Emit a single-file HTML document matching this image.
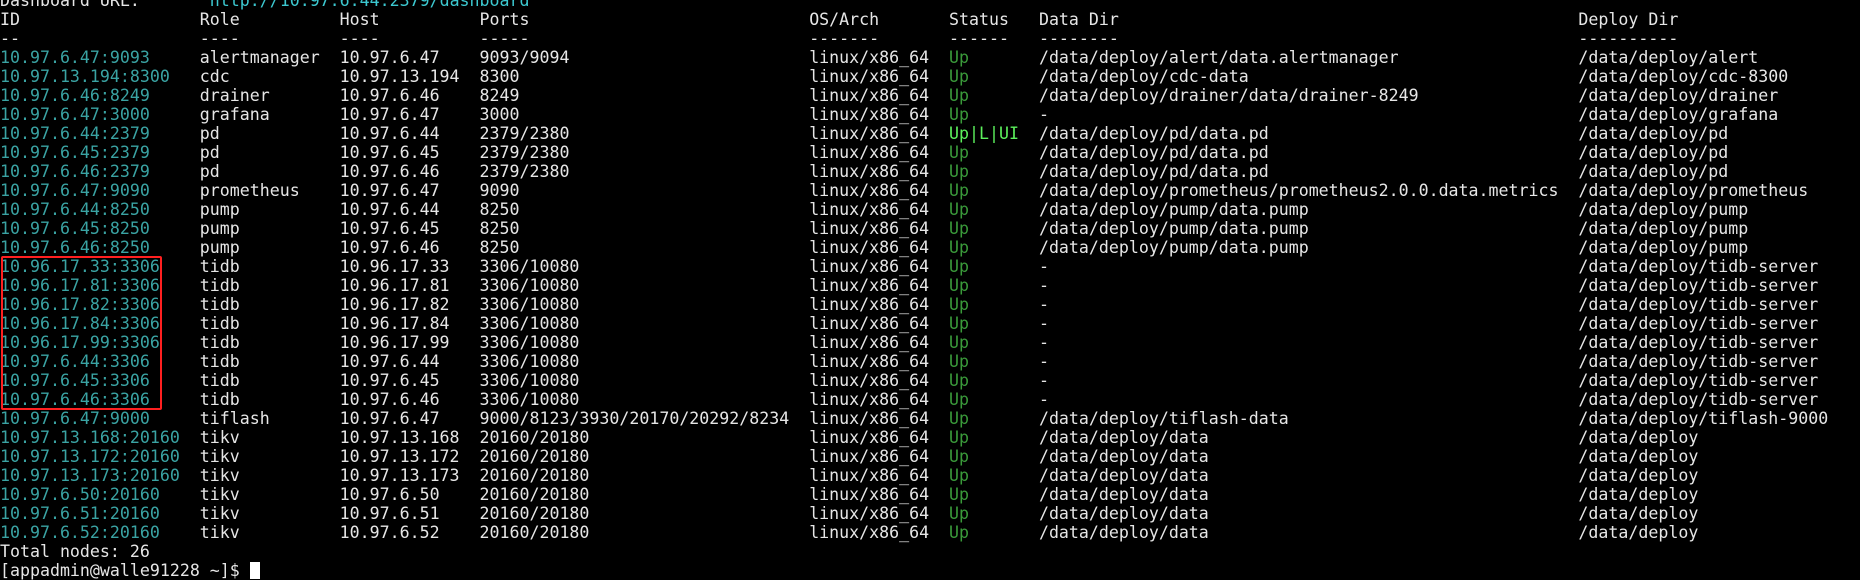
<!DOCTYPE html>
<html><head><meta charset="utf-8"><style>
html,body{margin:0;padding:0;background:#000;width:1860px;height:573px;overflow:hidden}
#t{position:absolute;left:0;top:-9.5px;font-family:"DejaVu Sans Mono","Liberation Mono",monospace;font-size:16.6px;line-height:19px;color:#e6e6e6}
.l{height:19px;white-space:pre}
.l span{display:inline-block;white-space:pre}
.a{width:20ch}.b{width:14ch}.c{width:14ch}.d{width:33ch}.e{width:14ch}.f{width:9ch}.g{width:54ch}
.i{color:#3aa3a3}.u{color:#3a9a3a}.uu{color:#5cf05c}.url{color:#3cc8d0}
#box{position:absolute;left:1px;top:256px;width:157px;height:150px;border:2px solid #ff2020;border-radius:2px}
.cur{display:inline-block;width:10px;height:17px;background:#fff;vertical-align:-3px}
</style></head><body>
<div id="t"><div class="l">Dashboard URL:       <span class="url">http://10.97.6.44:2379/dashboard</span></div><div class="l"><span class="a">ID</span><span class="b">Role</span><span class="c">Host</span><span class="d">Ports</span><span class="e">OS/Arch</span><span class="f">Status</span><span class="g">Data Dir</span><span>Deploy Dir</span></div><div class="l"><span class="a">--</span><span class="b">----</span><span class="c">----</span><span class="d">-----</span><span class="e">-------</span><span class="f">------</span><span class="g">--------</span><span>----------</span></div><div class="l"><span class="a i">10.97.6.47:9093</span><span class="b">alertmanager</span><span class="c">10.97.6.47</span><span class="d">9093/9094</span><span class="e">linux/x86_64</span><span class="f u">Up</span><span class="g">/data/deploy/alert/data.alertmanager</span><span>/data/deploy/alert</span></div><div class="l"><span class="a i">10.97.13.194:8300</span><span class="b">cdc</span><span class="c">10.97.13.194</span><span class="d">8300</span><span class="e">linux/x86_64</span><span class="f u">Up</span><span class="g">/data/deploy/cdc-data</span><span>/data/deploy/cdc-8300</span></div><div class="l"><span class="a i">10.97.6.46:8249</span><span class="b">drainer</span><span class="c">10.97.6.46</span><span class="d">8249</span><span class="e">linux/x86_64</span><span class="f u">Up</span><span class="g">/data/deploy/drainer/data/drainer-8249</span><span>/data/deploy/drainer</span></div><div class="l"><span class="a i">10.97.6.47:3000</span><span class="b">grafana</span><span class="c">10.97.6.47</span><span class="d">3000</span><span class="e">linux/x86_64</span><span class="f u">Up</span><span class="g">-</span><span>/data/deploy/grafana</span></div><div class="l"><span class="a i">10.97.6.44:2379</span><span class="b">pd</span><span class="c">10.97.6.44</span><span class="d">2379/2380</span><span class="e">linux/x86_64</span><span class="f uu">Up|L|UI</span><span class="g">/data/deploy/pd/data.pd</span><span>/data/deploy/pd</span></div><div class="l"><span class="a i">10.97.6.45:2379</span><span class="b">pd</span><span class="c">10.97.6.45</span><span class="d">2379/2380</span><span class="e">linux/x86_64</span><span class="f u">Up</span><span class="g">/data/deploy/pd/data.pd</span><span>/data/deploy/pd</span></div><div class="l"><span class="a i">10.97.6.46:2379</span><span class="b">pd</span><span class="c">10.97.6.46</span><span class="d">2379/2380</span><span class="e">linux/x86_64</span><span class="f u">Up</span><span class="g">/data/deploy/pd/data.pd</span><span>/data/deploy/pd</span></div><div class="l"><span class="a i">10.97.6.47:9090</span><span class="b">prometheus</span><span class="c">10.97.6.47</span><span class="d">9090</span><span class="e">linux/x86_64</span><span class="f u">Up</span><span class="g">/data/deploy/prometheus/prometheus2.0.0.data.metrics</span><span>/data/deploy/prometheus</span></div><div class="l"><span class="a i">10.97.6.44:8250</span><span class="b">pump</span><span class="c">10.97.6.44</span><span class="d">8250</span><span class="e">linux/x86_64</span><span class="f u">Up</span><span class="g">/data/deploy/pump/data.pump</span><span>/data/deploy/pump</span></div><div class="l"><span class="a i">10.97.6.45:8250</span><span class="b">pump</span><span class="c">10.97.6.45</span><span class="d">8250</span><span class="e">linux/x86_64</span><span class="f u">Up</span><span class="g">/data/deploy/pump/data.pump</span><span>/data/deploy/pump</span></div><div class="l"><span class="a i">10.97.6.46:8250</span><span class="b">pump</span><span class="c">10.97.6.46</span><span class="d">8250</span><span class="e">linux/x86_64</span><span class="f u">Up</span><span class="g">/data/deploy/pump/data.pump</span><span>/data/deploy/pump</span></div><div class="l"><span class="a i">10.96.17.33:3306</span><span class="b">tidb</span><span class="c">10.96.17.33</span><span class="d">3306/10080</span><span class="e">linux/x86_64</span><span class="f u">Up</span><span class="g">-</span><span>/data/deploy/tidb-server</span></div><div class="l"><span class="a i">10.96.17.81:3306</span><span class="b">tidb</span><span class="c">10.96.17.81</span><span class="d">3306/10080</span><span class="e">linux/x86_64</span><span class="f u">Up</span><span class="g">-</span><span>/data/deploy/tidb-server</span></div><div class="l"><span class="a i">10.96.17.82:3306</span><span class="b">tidb</span><span class="c">10.96.17.82</span><span class="d">3306/10080</span><span class="e">linux/x86_64</span><span class="f u">Up</span><span class="g">-</span><span>/data/deploy/tidb-server</span></div><div class="l"><span class="a i">10.96.17.84:3306</span><span class="b">tidb</span><span class="c">10.96.17.84</span><span class="d">3306/10080</span><span class="e">linux/x86_64</span><span class="f u">Up</span><span class="g">-</span><span>/data/deploy/tidb-server</span></div><div class="l"><span class="a i">10.96.17.99:3306</span><span class="b">tidb</span><span class="c">10.96.17.99</span><span class="d">3306/10080</span><span class="e">linux/x86_64</span><span class="f u">Up</span><span class="g">-</span><span>/data/deploy/tidb-server</span></div><div class="l"><span class="a i">10.97.6.44:3306</span><span class="b">tidb</span><span class="c">10.97.6.44</span><span class="d">3306/10080</span><span class="e">linux/x86_64</span><span class="f u">Up</span><span class="g">-</span><span>/data/deploy/tidb-server</span></div><div class="l"><span class="a i">10.97.6.45:3306</span><span class="b">tidb</span><span class="c">10.97.6.45</span><span class="d">3306/10080</span><span class="e">linux/x86_64</span><span class="f u">Up</span><span class="g">-</span><span>/data/deploy/tidb-server</span></div><div class="l"><span class="a i">10.97.6.46:3306</span><span class="b">tidb</span><span class="c">10.97.6.46</span><span class="d">3306/10080</span><span class="e">linux/x86_64</span><span class="f u">Up</span><span class="g">-</span><span>/data/deploy/tidb-server</span></div><div class="l"><span class="a i">10.97.6.47:9000</span><span class="b">tiflash</span><span class="c">10.97.6.47</span><span class="d">9000/8123/3930/20170/20292/8234</span><span class="e">linux/x86_64</span><span class="f u">Up</span><span class="g">/data/deploy/tiflash-data</span><span>/data/deploy/tiflash-9000</span></div><div class="l"><span class="a i">10.97.13.168:20160</span><span class="b">tikv</span><span class="c">10.97.13.168</span><span class="d">20160/20180</span><span class="e">linux/x86_64</span><span class="f u">Up</span><span class="g">/data/deploy/data</span><span>/data/deploy</span></div><div class="l"><span class="a i">10.97.13.172:20160</span><span class="b">tikv</span><span class="c">10.97.13.172</span><span class="d">20160/20180</span><span class="e">linux/x86_64</span><span class="f u">Up</span><span class="g">/data/deploy/data</span><span>/data/deploy</span></div><div class="l"><span class="a i">10.97.13.173:20160</span><span class="b">tikv</span><span class="c">10.97.13.173</span><span class="d">20160/20180</span><span class="e">linux/x86_64</span><span class="f u">Up</span><span class="g">/data/deploy/data</span><span>/data/deploy</span></div><div class="l"><span class="a i">10.97.6.50:20160</span><span class="b">tikv</span><span class="c">10.97.6.50</span><span class="d">20160/20180</span><span class="e">linux/x86_64</span><span class="f u">Up</span><span class="g">/data/deploy/data</span><span>/data/deploy</span></div><div class="l"><span class="a i">10.97.6.51:20160</span><span class="b">tikv</span><span class="c">10.97.6.51</span><span class="d">20160/20180</span><span class="e">linux/x86_64</span><span class="f u">Up</span><span class="g">/data/deploy/data</span><span>/data/deploy</span></div><div class="l"><span class="a i">10.97.6.52:20160</span><span class="b">tikv</span><span class="c">10.97.6.52</span><span class="d">20160/20180</span><span class="e">linux/x86_64</span><span class="f u">Up</span><span class="g">/data/deploy/data</span><span>/data/deploy</span></div><div class="l">Total nodes: 26</div><div class="l">[appadmin@walle91228 ~]$ <span class="cur"></span></div></div>
<div id="box"></div>
</body></html>
